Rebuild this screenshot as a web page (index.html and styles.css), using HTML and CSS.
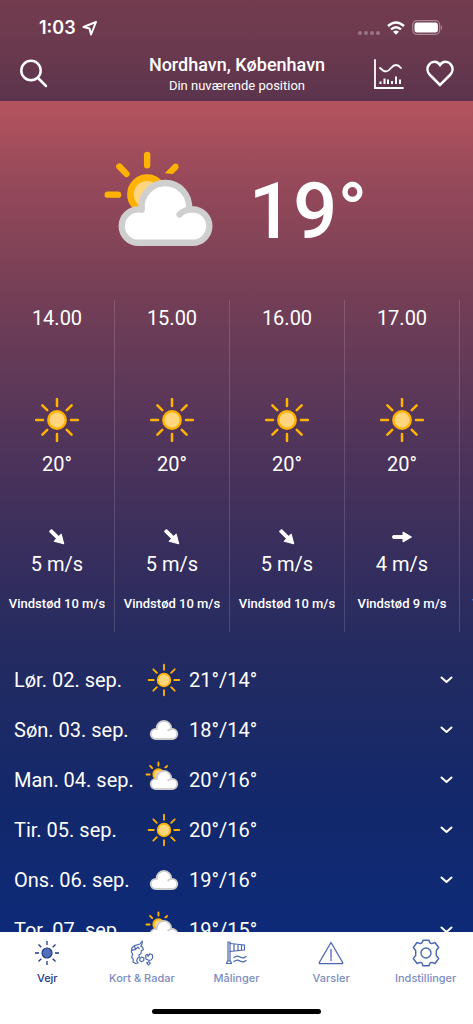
FILE: index.html
```html
<!DOCTYPE html>
<html lang="da">
<head>
<meta charset="utf-8">
<meta name="viewport" content="width=device-width, initial-scale=1">
<title>Vejr</title>
<link rel="stylesheet" href="styles.css">
</head>
<body>
<svg class="defs" aria-hidden="true">
  <defs>
    <g id="sun">
      <circle r="8.7" fill="#ffd57e" stroke="#ffb300" stroke-width="2.4"/>
      <path d="M0-21V-14M0 14V21M-21 0H-14M14 0H21M-14.6-14.6L-9.8-9.8M9.8 9.8L14.6 14.6M14.6-14.6L9.8-9.8M-9.8 9.8L-14.6 14.6" fill="none" stroke="#ffb300" stroke-width="2.5" stroke-linecap="round"/>
    </g>
    <g id="cloud">
      <path d="M147 304A50 50 0 0 1 147 204Q152 204 157 205A71 71 0 1 1 298 204H309A50 50 0 0 1 309 304Z" fill="#fff" stroke="#cfcfcf" stroke-width="19" stroke-linejoin="round"/>
      <path d="M270 219Q285 204 309 204" fill="none" stroke="#cfcfcf" stroke-width="19" stroke-linecap="round"/>
    </g>
    <g id="partly">
      <circle cx="173" cy="159" r="50" fill="#ffd57e" stroke="#ffb300" stroke-width="20"/>
      <path d="M173 41V72M55 160H86M90 76L111 98" fill="none" stroke="#ffb300" stroke-width="19" stroke-linecap="round"/>
      <path d="M226 96L252 69Q258 64 264 69Q270 75 265 83L250 98Z" fill="#ffb300"/>
      <use href="#cloud"/>
    </g>
    <path id="arrow" d="M-9-1.4H1V-5L9.500 0L1 5V1.400H-9Q-10 0-9-1.400Z" fill="#fff" stroke="#fff" stroke-linejoin="round"/>
    <path id="chevron" d="M1.500 1.500L6.500 6L11.500 1.500" fill="none" stroke="#fff" stroke-width="2" stroke-linecap="round" stroke-linejoin="round"/>
  </defs>
</svg>

<header class="header">
  <div class="status">
    <div class="clock"><span>1:03</span>
      <svg width="16" height="16" viewBox="0 0 16 16"><path d="M14 2L1.500 7L7.500 8.500L9 14.500Z" fill="none" stroke="#fff" stroke-width="2" stroke-linejoin="round"/></svg>
    </div>
    <div class="signals">
      <svg width="22" height="18" viewBox="0 0 22 18"><g fill="#fff" opacity=".3"><circle cx="2" cy="14" r="2"/><circle cx="8" cy="14" r="2"/><circle cx="14" cy="14" r="2"/><circle cx="20" cy="14" r="2"/></g></svg>
      <svg width="18" height="14" viewBox="0 0 18 14"><g fill="none" stroke="#fff" stroke-width="2.500"><path d="M1 5Q9-2 17 5"/><path d="M4 8.400Q9 4 14 8.400"/></g><path d="M6 10.700Q9 8.200 12 10.700L9 13.800Z" fill="#fff"/></svg>
      <svg width="31" height="15" viewBox="0 0 31 15"><rect x=".7" y=".7" width="27" height="13.600" rx="4" fill="none" stroke="#fff" stroke-opacity=".4" stroke-width="1.200"/><rect x="2.500" y="2.500" width="23.400" height="10" rx="2.300" fill="#fff"/><path d="M29 5Q31 7.500 29 10Z" fill="#fff" opacity=".5"/></svg>
    </div>
  </div>
  <div class="toolbar">
    <button class="icon-button" aria-label="Søg">
      <svg width="28" height="29" viewBox="0 0 28 29"><g fill="none" stroke="#fff" stroke-width="2.500" stroke-linecap="round"><circle cx="11" cy="11.500" r="9.700"/><path d="M18 19L26 27"/></g></svg>
    </button>
    <div class="place">
      <h1 class="place-name">Nordhavn, København</h1>
      <p class="place-note">Din nuværende position</p>
    </div>
    <div class="actions">
      <button class="icon-button" aria-label="Graf">
        <svg width="30" height="30" viewBox="0 0 30 30"><g fill="none" stroke="#fff" stroke-linecap="round" stroke-width="1.800"><path d="M1 1V29H29"/><path d="M6 9C11 14 14 13 17 9Q22 3 27 9"/><path d="M6.500 22.500V25M10.500 19.500V25M14 20.500V25M18 22V25M22 17.500V25M26 20.500V25" stroke-linecap="butt" stroke-width="2"/></g></svg>
      </button>
      <button class="icon-button" aria-label="Favorit">
        <svg width="28" height="27" viewBox="0 0 28 27"><path d="M14 25L4 15C1 12 1 8 2.500 5.500C5 1 11 .5 14 5C17 .5 23 1 25.500 5.500C27 8 27 12 24 15Z" fill="none" stroke="#fff" stroke-width="2.500" stroke-linejoin="miter"/></svg>
      </button>
    </div>
  </div>
</header>

<main class="main">
  <section class="now">
    <svg width="109" height="96" viewBox="44 30 326 286"><use href="#partly"/></svg>
    <span class="now-temp">19°</span>
  </section>

  <section class="hours">
    <article class="hour"><span class="value">14.00</span><svg class="hour-sun" viewBox="-22 -22 44 44"><use href="#sun"/></svg><span class="value">20°</span><svg class="hour-arrow" viewBox="-10 -10 20 20"><use href="#arrow" transform="rotate(45)"/></svg><span class="value">5 m/s</span><span class="gust">Vindstød 10 m/s</span></article>
    <article class="hour"><span class="value">15.00</span><svg class="hour-sun" viewBox="-22 -22 44 44"><use href="#sun"/></svg><span class="value">20°</span><svg class="hour-arrow" viewBox="-10 -10 20 20"><use href="#arrow" transform="rotate(45)"/></svg><span class="value">5 m/s</span><span class="gust">Vindstød 10 m/s</span></article>
    <article class="hour"><span class="value">16.00</span><svg class="hour-sun" viewBox="-22 -22 44 44"><use href="#sun"/></svg><span class="value">20°</span><svg class="hour-arrow" viewBox="-10 -10 20 20"><use href="#arrow" transform="rotate(45)"/></svg><span class="value">5 m/s</span><span class="gust">Vindstød 10 m/s</span></article>
    <article class="hour"><span class="value">17.00</span><svg class="hour-sun" viewBox="-22 -22 44 44"><use href="#sun"/></svg><span class="value">20°</span><svg class="hour-arrow" viewBox="-10 -10 20 20"><use href="#arrow"/></svg><span class="value">4 m/s</span><span class="gust">Vindstød 9 m/s</span></article>
    <article class="hour"><span class="value">18.00</span><svg class="hour-sun" viewBox="-22 -22 44 44"><use href="#sun"/></svg><span class="value">20°</span><svg class="hour-arrow" viewBox="-10 -10 20 20"><use href="#arrow"/></svg><span class="value">4 m/s</span><span class="gust">Vindstød 9 m/s</span></article>
  </section>

  <section class="days">
    <button class="day"><span class="date">Lør. 02. sep.</span><svg class="day-icon" viewBox="-26 -26 52 52"><use href="#sun"/></svg><span class="range">21°/14°</span><svg class="chevron" viewBox="0 0 13 8"><use href="#chevron"/></svg></button>
    <button class="day"><span class="date">Søn. 03. sep.</span><svg class="day-icon" viewBox="40 27 376 376"><use href="#cloud"/></svg><span class="range">18°/14°</span><svg class="chevron" viewBox="0 0 13 8"><use href="#chevron"/></svg></button>
    <button class="day"><span class="date">Man. 04. sep.</span><svg class="day-icon" viewBox="40 27 376 376"><use href="#partly"/></svg><span class="range">20°/16°</span><svg class="chevron" viewBox="0 0 13 8"><use href="#chevron"/></svg></button>
    <button class="day"><span class="date">Tir. 05. sep.</span><svg class="day-icon" viewBox="-26 -26 52 52"><use href="#sun"/></svg><span class="range">20°/16°</span><svg class="chevron" viewBox="0 0 13 8"><use href="#chevron"/></svg></button>
    <button class="day"><span class="date">Ons. 06. sep.</span><svg class="day-icon" viewBox="40 27 376 376"><use href="#cloud"/></svg><span class="range">19°/16°</span><svg class="chevron" viewBox="0 0 13 8"><use href="#chevron"/></svg></button>
    <button class="day"><span class="date">Tor. 07. sep.</span><svg class="day-icon" viewBox="40 27 376 376"><use href="#partly"/></svg><span class="range">19°/15°</span><svg class="chevron" viewBox="0 0 13 8"><use href="#chevron"/></svg></button>
  </section>
</main>

<footer class="footer">
  <nav class="tabs">
    <a class="tab tab-active" href="#vejr">
      <svg class="tab-icon" viewBox="-14 -14 28 28"><circle r="5" fill="#5270b8" stroke="#1f3a85" stroke-width="1.200"/><path d="M0-12V-8M0 8V12M-12 0H-8M8 0H12M-8.500-8.500L-5.700-5.700M5.700 5.700L8.500 8.500M8.500-8.500L5.700-5.700M-5.700 5.700L-8.500 8.500" fill="none" stroke="#1f3a85" stroke-width="1.300"/></svg>
      <span>Vejr</span></a>
    <a class="tab" href="#kort">
      <svg class="tab-icon" viewBox="382 41 84 84"><g class="line" stroke-width="3.500"><path d="M425 47L418 56L402 61L394 67L392 80L396 86L393 96L398 102L397 110L403 114L412 113L408 106L411 98L416 96L415 88L421 85L422 76L428 73L426 66L420 63L424 57Z"/><path d="M393 75L405 72L412 65L416 70M401 62L405 72"/><path d="M418 99L423 95L430 98L429 106L422 109L417 105Z"/><path d="M435 90L441 87L442 93L448 85L455 88L456 98L451 104L444 105L436 101Z"/><path d="M438 112L445 109L449 114L443 119Z"/></g></svg>
      <span>Kort &amp; Radar</span></a>
    <a class="tab" href="#maalinger">
      <svg class="tab-icon" viewBox="0 0 28 28"><g class="line" stroke-width="1.200"><path d="M6 3V22M8 3V22M6 3H8M4.500 24.500L5.500 22H8.500L9.500 24.500Z"/><path d="M8 4.500L22.500 6V11L8 12.500M12 5V12M16 5.500V11.500M19.500 6V11.200"/><path d="M12 18.500Q15 16 18 18T24 17.500M12 22.500Q15 20 18 22T24 21.500"/></g></svg>
      <span>Målinger</span></a>
    <a class="tab" href="#varsler">
      <svg class="tab-icon" viewBox="0 0 28 28"><g class="line" stroke-width="1.300"><path d="M14 3.500L2.300 23.500Q2 24.700 3 24.700H25Q26 24.700 25.700 23.500Z"/><path d="M14 10.500V18.500M14 20V21.500"/></g></svg>
      <span>Varsler</span></a>
    <a class="tab" href="#indstillinger">
      <svg class="tab-icon" viewBox="-14 -14 28 28"><g class="line" stroke-width="1.400"><circle r="5"/><path d="M-3-12.800H3Q3.500-9.500 5.800-9.400L9-10.500L12.700-5.500Q11-3.500 10.300-2.500V2.500Q11 3.500 12.700 5.500L9 10.500L5.800 9.400Q3.500 9.500 3 12.800H-3Q-3.500 9.500-5.800 9.400L-9 10.500L-12.700 5.500Q-11 3.500-10.300 2.500V-2.500Q-11-3.500-12.700-5.500L-9-10.500L-5.800-9.400Q-3.500-9.500-3-12.800Z"/></g></svg>
      <span>Indstillinger</span></a>
  </nav>
  <div class="home-indicator"></div>
</footer>
</body>
</html>
```

FILE: styles.css
```css
* {
  box-sizing: border-box;
}

body {
  margin: 0;
  height: 100vh;
  display: flex;
  flex-direction: column;
  overflow: hidden;
  font-family: Roboto, sans-serif;
  color: #fff;
  background: #0d2a78;
}

svg {
  display: block;
  flex: none;
}

button {
  font: inherit;
  color: inherit;
  background: none;
  border: 0;
  padding: 0;
}

.defs {
  position: absolute;
  width: 0;
  height: 0;
}

.header {
  flex: none;
  background: linear-gradient(#733c4f, #6a394e 50%, #5b344d);
}

.status {
  display: flex;
  justify-content: space-between;
  align-items: center;
  height: 44px;
  padding: 11px 30px 0 39px;
}

.clock {
  display: flex;
  align-items: center;
  gap: 6px;
  font: 600 18px/24px Inter, sans-serif;
}

.signals {
  display: flex;
  align-items: center;
  gap: 7px;
}

.toolbar {
  display: grid;
  grid-template-columns: 1fr auto 1fr;
  align-items: center;
  height: 57px;
  padding: 2px 19px 0 20px;
}

.icon-button {
  display: flex;
}

.place {
  padding-top: 2px;
  text-align: center;
}

.place-name {
  margin: 0;
  font-size: 18px;
  font-weight: 500;
  line-height: 22px;
}

.place-note {
  margin: 0;
  font-size: 13px;
  line-height: 20px;
}

.actions {
  display: flex;
  justify-content: flex-end;
  align-items: center;
  gap: 22px;
}

.main {
  flex: 1;
  min-height: 0;
  overflow: hidden;
  background: linear-gradient(#b5535e, #95495a 10%, #753f56 23%, #46315b 46%, #252b60 65%, #13286b 84%, #0d2a78);
}

.now {
  display: flex;
  justify-content: center;
  align-items: center;
  gap: 36px;
  height: 199px;
  padding: 0 2px 4px 0;
}

.now-temp {
  font-size: 78px;
  font-weight: 500;
  line-height: 80px;
  padding-top: 26px;
}

.hours {
  display: flex;
  overflow-x: auto;
  scrollbar-width: none;
}

.hour {
  flex: none;
  width: 115px;
  display: flex;
  flex-direction: column;
  align-items: center;
  padding: 6px 0 18px;
  border-right: 1px solid rgba(255, 255, 255, 0.15);
}

.value {
  font-size: 20px;
  line-height: 24px;
}

.hour-sun {
  width: 44px;
  height: 44px;
  margin: 68px 0 10px;
}

.hour-arrow {
  width: 20px;
  height: 20px;
  margin: 51px 0 5px;
}

.gust {
  margin-top: 18px;
  font-size: 13px;
  font-weight: 500;
  line-height: 20px;
  white-space: nowrap;
}

.days {
  display: flex;
  flex-direction: column;
  padding-top: 23px;
}

.day {
  flex: none;
  display: flex;
  align-items: center;
  height: 50px;
  padding: 0 20px 0 14px;
  font-size: 20px;
  line-height: 24px;
  text-align: left;
}

.date {
  width: 131px;
}

.day-icon {
  width: 38px;
  height: 38px;
}

.range {
  flex: 1;
  padding-left: 6px;
}

.chevron {
  width: 13px;
  height: 8px;
}

.footer {
  flex: none;
  display: flex;
  flex-direction: column;
  align-items: center;
  height: 92px;
  padding-bottom: 10px;
  background: #fff;
}

.tabs {
  display: flex;
  width: 100%;
  padding-top: 7px;
}

.tab {
  flex: 1 1 0;
  display: flex;
  flex-direction: column;
  align-items: center;
  gap: 3px;
  font: 500 11px/16px Inter, sans-serif;
  color: #7c8dbf;
  text-decoration: none;
  white-space: nowrap;
}

.tab-active {
  color: #1f3a85;
}

.tab-icon {
  width: 28px;
  height: 28px;
}

.line {
  fill: none;
  stroke: #4a67b2;
  stroke-linejoin: round;
  stroke-linecap: round;
}

.home-indicator {
  width: 169px;
  height: 5px;
  margin-top: auto;
  border-radius: 3px;
  background: #000;
}
```
